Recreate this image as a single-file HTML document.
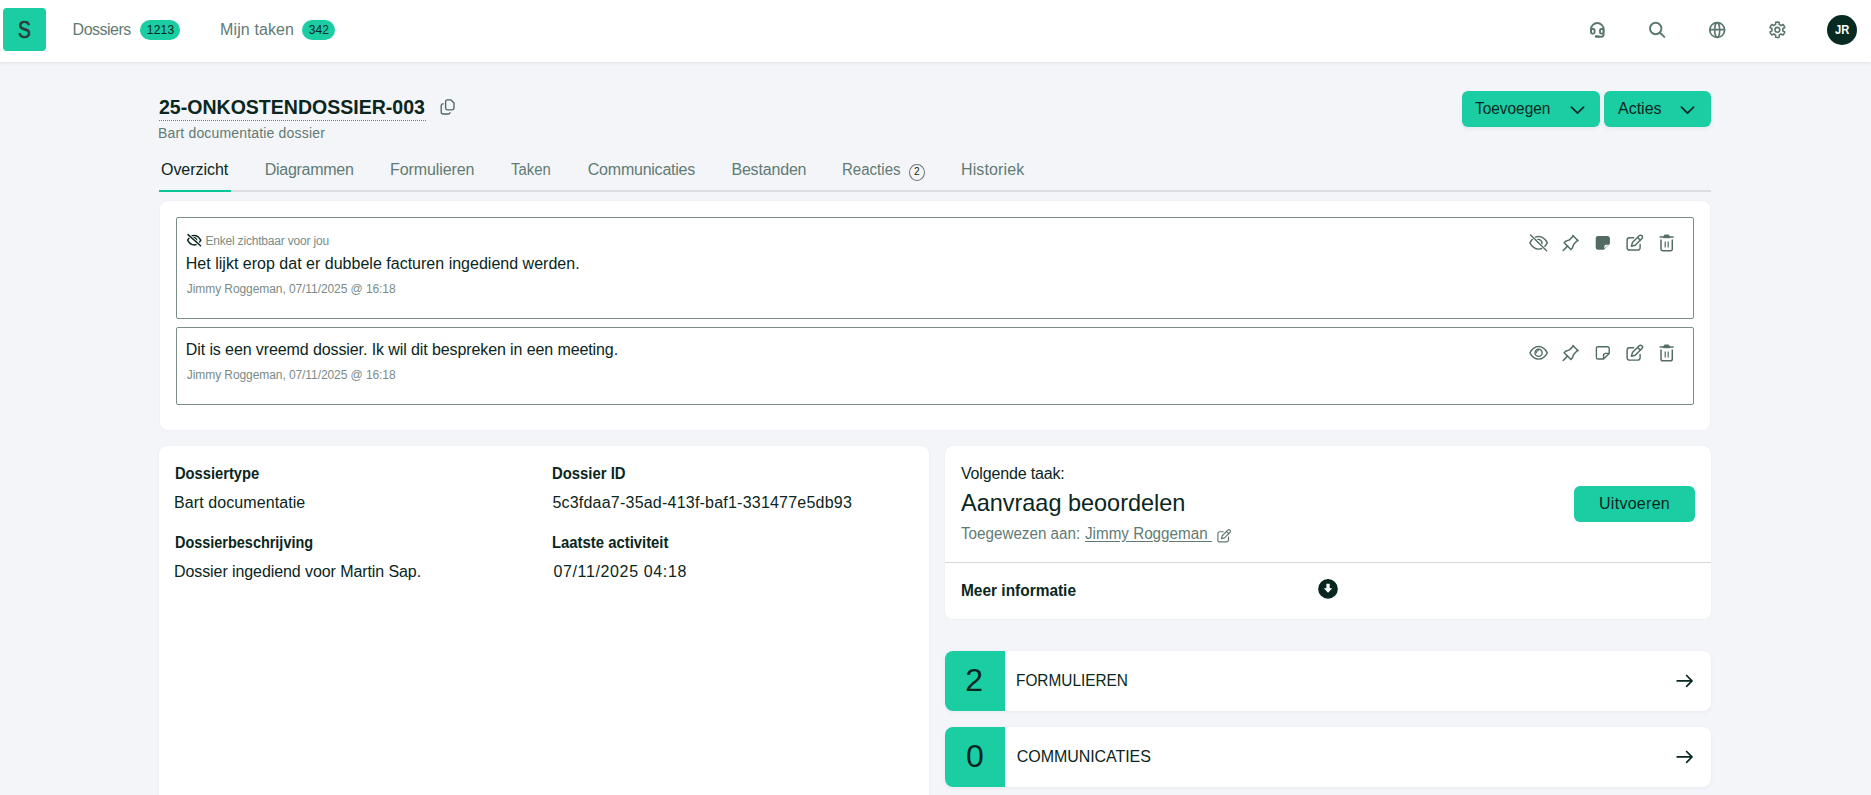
<!DOCTYPE html>
<html><head><meta charset="utf-8"><style>
html,body{margin:0;padding:0;}
body{width:1871px;height:795px;background:#f4f5f9;position:relative;overflow:hidden;font-family:"Liberation Sans",sans-serif;}
.t{position:absolute;white-space:pre;line-height:normal;}
.a{position:absolute;}
svg.a{overflow:visible;}
</style></head><body>
<div class="a" style="left:0;top:0;width:1871px;height:62px;background:#fff;box-shadow:0 1px 3px rgba(20,40,40,.10);"></div>
<div class="a" style="left:3px;top:8px;width:43px;height:43px;border-radius:4px;background:#1acda3;"></div>
<div class="a" style="left:140px;top:20px;width:40px;height:20px;border-radius:10px;background:#1acda3;"></div>
<div class="a" style="left:302px;top:20px;width:33px;height:20px;border-radius:10px;background:#1acda3;"></div>
<div class="a" style="left:1827px;top:15px;width:30px;height:30px;border-radius:50%;background:#072a22;"></div>
<div class="a" style="left:159px;top:120px;width:267px;height:0;border-top:1px dotted #6c817b;"></div>
<div class="a" style="left:1462px;top:91px;width:138px;height:36px;border-radius:6px;background:#1acda3;box-shadow:0 2px 4px rgba(0,0,0,.06);"></div>
<div class="a" style="left:1604px;top:91px;width:107px;height:36px;border-radius:6px;background:#1acda3;box-shadow:0 2px 4px rgba(0,0,0,.06);"></div>
<div class="a" style="left:159px;top:190px;width:1552px;height:2px;background:#dcdfe2;"></div>
<div class="a" style="left:159px;top:190px;width:72px;height:2px;background:#04c898;"></div>
<div class="a" style="left:909px;top:164px;width:14px;height:15px;border-radius:50%;border:1px solid #6f7372;"></div>
<div class="a" style="left:160px;top:201px;width:1550px;height:229px;border-radius:8px;background:#fff;box-shadow:0 0 3px rgba(30,40,60,.05);"></div>
<div class="a" style="left:176px;top:217px;width:1516px;height:100px;border-radius:2px;border:1px solid #7b8e89;"></div>
<div class="a" style="left:176px;top:327px;width:1516px;height:76px;border-radius:2px;border:1px solid #7b8e89;"></div>
<div class="a" style="left:159px;top:446px;width:770px;height:400px;border-radius:8px;background:#fff;box-shadow:0 0 3px rgba(30,40,60,.05);"></div>
<div class="a" style="left:945px;top:446px;width:766px;height:173px;border-radius:8px;background:#fff;box-shadow:0 0 3px rgba(30,40,60,.05);"></div>
<div class="a" style="left:945px;top:562px;width:766px;height:1px;background:#d6dbda;"></div>
<div class="a" style="left:1574px;top:486px;width:121px;height:36px;border-radius:6px;background:#1acda3;"></div>
<div class="a" style="left:945px;top:651px;width:766px;height:60px;border-radius:8px;background:#fff;box-shadow:0 1px 4px rgba(30,40,60,.06);overflow:hidden;"><div style="width:60px;height:60px;background:#1acda3;"></div></div>
<div class="a" style="left:945px;top:727px;width:766px;height:60px;border-radius:8px;background:#fff;box-shadow:0 1px 4px rgba(30,40,60,.06);overflow:hidden;"><div style="width:60px;height:60px;background:#1acda3;"></div></div>

<svg class="a" style="left:0;top:0" width="1871" height="795" viewBox="0 0 1871 795">
<g fill="none" stroke="#5a766f" stroke-width="1.9" stroke-linecap="round" stroke-linejoin="round">
  <path d="M1591 31 V29.3 A6.3 6.3 0 0 1 1603.6 29.3 V31"/>
  <rect x="1591" y="29" width="3.6" height="4.6" rx="1.3"/>
  <rect x="1600" y="29" width="3.6" height="4.6" rx="1.3"/>
  <path d="M1603.6 33 V34.2 a2.6 2.6 0 0 1 -2.6 2.6 H1598.5"/>
  <line x1="1596" y1="36.5" x2="1598.2" y2="36.5" stroke-width="2.5"/>
  <circle cx="1655.7" cy="28.5" r="5.7"/>
  <line x1="1660" y1="32.8" x2="1664.3" y2="36.9"/>
  <circle cx="1717.2" cy="30" r="7.4" stroke-width="1.7"/>
  <ellipse cx="1717.2" cy="30" rx="2.5" ry="7.4" stroke-width="1.6"/>
  <line x1="1710" y1="29.6" x2="1724.4" y2="29.6" stroke-width="1.6"/>
  <path d="M1775.61 24.60 L1775.67 22.30 A7.7 7.7 0 0 1 1779.13 22.30 L1779.19 24.60 A5.5 5.5 0 0 1 1781.01 25.65 L1783.03 24.55 A7.7 7.7 0 0 1 1784.76 27.55 L1782.80 28.75 A5.5 5.5 0 0 1 1782.80 30.85 L1784.76 32.05 A7.7 7.7 0 0 1 1783.03 35.05 L1781.01 33.95 A5.5 5.5 0 0 1 1779.19 35.00 L1779.13 37.30 A7.7 7.7 0 0 1 1775.67 37.30 L1775.61 35.00 A5.5 5.5 0 0 1 1773.79 33.95 L1771.77 35.05 A7.7 7.7 0 0 1 1770.04 32.05 L1772.00 30.85 A5.5 5.5 0 0 1 1772.00 28.75 L1770.04 27.55 A7.7 7.7 0 0 1 1771.77 24.55 L1773.79 25.65 A5.5 5.5 0 0 1 1775.61 24.60 Z" stroke-width="1.6"/>
  <circle cx="1777.4" cy="29.8" r="2.4" stroke-width="1.6"/>
</g>
<g fill="none" stroke="#4f6660" stroke-width="1.35" stroke-linejoin="round" stroke-linecap="round">
  <path d="M447.4 99.9 H451 L454 102.9 V108.1 a1.8 1.8 0 0 1 -1.8 1.8 H447.4 a1.8 1.8 0 0 1 -1.8 -1.8 V101.7 a1.8 1.8 0 0 1 1.8 -1.8 Z"/>
  <path d="M443.3 103.8 H443 a1.8 1.8 0 0 0 -1.8 1.8 V112.2 a1.8 1.8 0 0 0 1.8 1.8 H448.3 a1.8 1.8 0 0 0 1.7 -1.4"/>
</g>
<g fill="none" stroke="#0a2620" stroke-width="1.7" stroke-linecap="round" stroke-linejoin="round">
  <polyline points="1571.4,107.1 1577.5,113.1 1583.6,107.1"/>
  <polyline points="1681.4,107.1 1687.5,113.1 1693.6,107.1"/>
  <path d="M1677.2 680.9 H1692 M1686.6 675.5 L1692 680.9 L1686.6 686.3"/>
  <path d="M1677.2 756.9 H1692 M1686.6 751.5 L1692 756.9 L1686.6 762.3"/>
</g>
<g fill="none" stroke="#0a2620" stroke-width="1.45" stroke-linecap="round">
  <path d="M187.60 240.20 C189.58 236.55 191.30 235.40 194.20 235.40 C197.10 235.40 198.82 236.55 200.80 240.20 C198.82 243.85 197.10 245.00 194.20 245.00 C191.30 245.00 189.58 243.85 187.60 240.20 Z"/>
  <path d="M192.50 238.50 A2.4 2.4 0 0 1 195.90 241.90"/>
  <line x1="188" y1="234.6" x2="200.6" y2="245.8" stroke="#fff" stroke-width="3.2" stroke-linecap="butt"/>
  <line x1="188" y1="234.6" x2="200.6" y2="245.8"/>
</g>
<path d="M1529.90 242.80 C1532.51 238.01 1534.77 236.50 1538.60 236.50 C1542.43 236.50 1544.69 238.01 1547.30 242.80 C1544.69 247.59 1542.43 249.10 1538.60 249.10 C1534.77 249.10 1532.51 247.59 1529.90 242.80 Z" fill="none" stroke="#526c65" stroke-width="1.4"/><path d="M1536.20 240.40 A3.4 3.4 0 0 1 1541.00 245.20" fill="none" stroke="#526c65" stroke-width="1.4"/><line x1="1530.6" y1="235.0" x2="1546.6" y2="250.8" stroke="#fff" stroke-width="2.8"/><line x1="1530.6" y1="235.0" x2="1546.6" y2="250.8" stroke="#526c65" stroke-width="1.4" stroke-linecap="round"/><g transform="translate(1558.9 231.7) scale(0.96)" fill="none" stroke="#526c65" stroke-width="1.56" stroke-linecap="round" stroke-linejoin="round"><path d="M15 4.5l-4 4l-4 1.5l-1.5 1.5l7 7l1.5 -1.5l1.5 -4l4 -4"/><path d="M9 15l-4.5 4.5"/><path d="M14.5 4l5.5 5.5"/></g><path d="M1598.0 236.7 H1607.6000000000001 a1.6 1.6 0 0 1 1.6 1.6 V243.4 L1603.6000000000001 249.0 H1598.0 a1.6 1.6 0 0 1 -1.6 -1.6 V238.29999999999998 a1.6 1.6 0 0 1 1.6 -1.6 Z" fill="#526c65" stroke="#526c65" stroke-width="1.4" stroke-linejoin="round"/><path d="M1604.3 248.6 V246.6 a1.9 1.9 0 0 1 1.9 -1.9 H1608.6 Z" fill="#fff"/><g transform="" fill="none" stroke="#526c65" stroke-width="1.45" stroke-linejoin="round" stroke-linecap="round"><path d="M1633.6 237.8 H1629.5 a2.4 2.4 0 0 0 -2.4 2.4 V247.7 a2.4 2.4 0 0 0 2.4 2.4 H1637.7 a2.4 2.4 0 0 0 2.4 -2.4 V244.4"/><path d="M1631.4 246.2 L1632.4 242.6 L1639.2 235.8 a1.95 1.95 0 0 1 2.76 2.76 L1635.2 245.3 Z"/><line x1="1637.6" y1="237.4" x2="1640.4" y2="240.2"/></g><g fill="none" stroke="#526c65" stroke-linecap="round"><line x1="1660.2" y1="237.0" x2="1673.0" y2="237.0" stroke-width="1.6"/><path d="M1663.6 237.4 L1664.5 234.9 H1668.7 L1669.6 237.4 Z" fill="#526c65" stroke-width="0.8" stroke-linejoin="round"/><path d="M1661.0 239.4 V248.9 a1.8 1.8 0 0 0 1.8 1.8 H1670.5 a1.8 1.8 0 0 0 1.8 -1.8 V239.4" stroke-width="1.5" stroke-linecap="butt"/><line x1="1665.2" y1="241.6" x2="1665.2" y2="247.5" stroke-width="1.2" stroke-linecap="butt"/><line x1="1668.2" y1="241.6" x2="1668.2" y2="247.5" stroke-width="1.2" stroke-linecap="butt"/></g>
<path d="M1529.90 352.80 C1532.51 348.01 1534.77 346.50 1538.60 346.50 C1542.43 346.50 1544.69 348.01 1547.30 352.80 C1544.69 357.59 1542.43 359.10 1538.60 359.10 C1534.77 359.10 1532.51 357.59 1529.90 352.80 Z" fill="none" stroke="#526c65" stroke-width="1.4"/><circle cx="1538.6" cy="352.8" r="3.6" fill="none" stroke="#526c65" stroke-width="1.4"/><path d="M1536.40 353.10 A2.3 2.3 0 0 1 1538.80 350.50" fill="none" stroke="#526c65" stroke-width="1.1"/><g transform="translate(1558.9 341.7) scale(0.96)" fill="none" stroke="#526c65" stroke-width="1.56" stroke-linecap="round" stroke-linejoin="round"><path d="M15 4.5l-4 4l-4 1.5l-1.5 1.5l7 7l1.5 -1.5l1.5 -4l4 -4"/><path d="M9 15l-4.5 4.5"/><path d="M14.5 4l5.5 5.5"/></g><path d="M1598.0 346.7 H1607.6000000000001 a1.6 1.6 0 0 1 1.6 1.6 V353.4 L1603.6000000000001 359.0 H1598.0 a1.6 1.6 0 0 1 -1.6 -1.6 V348.3 a1.6 1.6 0 0 1 1.6 -1.6 Z" fill="none" stroke="#526c65" stroke-width="1.4" stroke-linejoin="round"/><path d="M1603.6000000000001 359.0 V355.2 a1.8 1.8 0 0 1 1.8 -1.8 H1609.2" fill="none" stroke="#526c65" stroke-width="1.4" stroke-linejoin="round"/><g transform="" fill="none" stroke="#526c65" stroke-width="1.45" stroke-linejoin="round" stroke-linecap="round"><path d="M1633.6 347.8 H1629.5 a2.4 2.4 0 0 0 -2.4 2.4 V357.7 a2.4 2.4 0 0 0 2.4 2.4 H1637.7 a2.4 2.4 0 0 0 2.4 -2.4 V354.4"/><path d="M1631.4 356.2 L1632.4 352.6 L1639.2 345.8 a1.95 1.95 0 0 1 2.76 2.76 L1635.2 355.3 Z"/><line x1="1637.6" y1="347.4" x2="1640.4" y2="350.2"/></g><g fill="none" stroke="#526c65" stroke-linecap="round"><line x1="1660.2" y1="347.0" x2="1673.0" y2="347.0" stroke-width="1.6"/><path d="M1663.6 347.4 L1664.5 344.9 H1668.7 L1669.6 347.4 Z" fill="#526c65" stroke-width="0.8" stroke-linejoin="round"/><path d="M1661.0 349.4 V358.9 a1.8 1.8 0 0 0 1.8 1.8 H1670.5 a1.8 1.8 0 0 0 1.8 -1.8 V349.4" stroke-width="1.5" stroke-linecap="butt"/><line x1="1665.2" y1="351.6" x2="1665.2" y2="357.5" stroke-width="1.2" stroke-linecap="butt"/><line x1="1668.2" y1="351.6" x2="1668.2" y2="357.5" stroke-width="1.2" stroke-linecap="butt"/></g>
<g transform="translate(1217.3 529.4) scale(0.82) translate(-1626.4 -234.9)" fill="none" stroke="#5f7b74" stroke-width="1.45" stroke-linejoin="round" stroke-linecap="round"><path d="M1633.6 237.8 H1629.5 a2.4 2.4 0 0 0 -2.4 2.4 V247.7 a2.4 2.4 0 0 0 2.4 2.4 H1637.7 a2.4 2.4 0 0 0 2.4 -2.4 V244.4"/><path d="M1631.4 246.2 L1632.4 242.6 L1639.2 235.8 a1.95 1.95 0 0 1 2.76 2.76 L1635.2 245.3 Z"/><line x1="1637.6" y1="237.4" x2="1640.4" y2="240.2"/></g>
<circle cx="1328" cy="588.9" r="9.85" fill="#0a2620"/>
<path d="M1326.4 583.8 H1329.7 V588.2 H1332.3 L1328.05 592.8 L1323.8 588.2 H1326.4 Z" fill="#fff"/>
</svg>
<div id="t_S" class="t" style="left:18px;top:16px;font-size:24px;font-weight:400;color:#2b3e39;letter-spacing:0px;-webkit-text-stroke:0.7px #2b3e39;transform:scaleX(0.8000);transform-origin:0 0;">S</div>
<div id="t_nav1" class="t" style="left:72.6px;top:21px;font-size:16px;font-weight:400;color:#5f7b74;letter-spacing:-0.515px;">Dossiers</div>
<div id="t_b1" class="t" style="left:146.8px;top:23px;font-size:12px;font-weight:400;color:#0a2620;letter-spacing:0.201px;">1213</div>
<div id="t_nav2" class="t" style="left:220.1px;top:21px;font-size:16px;font-weight:400;color:#5f7b74;letter-spacing:0.102px;">Mijn taken</div>
<div id="t_b2" class="t" style="left:308.8px;top:23px;font-size:12px;font-weight:400;color:#0a2620;letter-spacing:0.0px;">342</div>
<div id="t_JR" class="t" style="left:1834.5px;top:22px;font-size:13px;font-weight:700;color:#ffffff;letter-spacing:0px;transform:scaleX(0.8619);transform-origin:0 0;">JR</div>
<div id="t_title" class="t" style="left:159.0px;top:95px;font-size:21px;font-weight:700;color:#0a2620;letter-spacing:0px;transform:scaleX(0.9300);transform-origin:0 0;">25-ONKOSTENDOSSIER-003</div>
<div id="t_sub" class="t" style="left:158.0px;top:125px;font-size:14px;font-weight:400;color:#5f7b74;letter-spacing:0.173px;">Bart documentatie dossier</div>
<div id="t_btn1" class="t" style="left:1475.0px;top:100px;font-size:16px;font-weight:400;color:#0a2620;letter-spacing:0px;transform:scaleX(0.9628);transform-origin:0 0;">Toevoegen</div>
<div id="t_btn2" class="t" style="left:1618.0px;top:100px;font-size:16px;font-weight:400;color:#0a2620;letter-spacing:0.0px;">Acties</div>
<div id="t_tab1" class="t" style="left:161.0px;top:161px;font-size:16px;font-weight:400;color:#0a2620;letter-spacing:-0.05px;">Overzicht</div>
<div id="t_tab2" class="t" style="left:264.8px;top:161px;font-size:16px;font-weight:400;color:#5f7b74;letter-spacing:-0.288px;">Diagrammen</div>
<div id="t_tab3" class="t" style="left:390.0px;top:161px;font-size:16px;font-weight:400;color:#5f7b74;letter-spacing:-0.1px;">Formulieren</div>
<div id="t_tab4" class="t" style="left:511.0px;top:161px;font-size:16px;font-weight:400;color:#5f7b74;letter-spacing:0px;transform:scaleX(0.9288);transform-origin:0 0;">Taken</div>
<div id="t_tab5" class="t" style="left:587.8px;top:161px;font-size:16px;font-weight:400;color:#5f7b74;letter-spacing:-0.234px;">Communicaties</div>
<div id="t_tab6" class="t" style="left:731.4px;top:161px;font-size:16px;font-weight:400;color:#5f7b74;letter-spacing:-0.175px;">Bestanden</div>
<div id="t_tab7" class="t" style="left:842.0px;top:161px;font-size:16px;font-weight:400;color:#5f7b74;letter-spacing:0px;transform:scaleX(0.9401);transform-origin:0 0;">Reacties</div>
<div id="t_tab7b" class="t" style="left:914px;top:166px;font-size:10px;font-weight:400;color:#0a2620;letter-spacing:0px;">2</div>
<div id="t_tab8" class="t" style="left:961.0px;top:161px;font-size:16px;font-weight:400;color:#5f7b74;letter-spacing:0.125px;">Historiek</div>
<div id="t_vis" class="t" style="left:205.4px;top:234px;font-size:12px;font-weight:400;color:#7a8c87;letter-spacing:-0.191px;">Enkel zichtbaar voor jou</div>
<div id="t_n1" class="t" style="left:185.8px;top:255px;font-size:16px;font-weight:400;color:#0a2620;letter-spacing:0.012px;">Het lijkt erop dat er dubbele facturen ingediend werden.</div>
<div id="t_m1" class="t" style="left:186.8px;top:282px;font-size:12px;font-weight:400;color:#7a8c87;letter-spacing:-0.079px;">Jimmy Roggeman, 07/11/2025 @ 16:18</div>
<div id="t_n2" class="t" style="left:185.8px;top:341px;font-size:16px;font-weight:400;color:#0a2620;letter-spacing:-0.099px;">Dit is een vreemd dossier. Ik wil dit bespreken in een meeting.</div>
<div id="t_m2" class="t" style="left:186.8px;top:368px;font-size:12px;font-weight:400;color:#7a8c87;letter-spacing:-0.079px;">Jimmy Roggeman, 07/11/2025 @ 16:18</div>
<div id="t_d1" class="t" style="left:175.0px;top:465px;font-size:16px;font-weight:700;color:#0a2620;letter-spacing:0px;transform:scaleX(0.9195);transform-origin:0 0;">Dossiertype</div>
<div id="t_d2" class="t" style="left:174.0px;top:494px;font-size:16px;font-weight:400;color:#0a2620;letter-spacing:0.086px;">Bart documentatie</div>
<div id="t_d3" class="t" style="left:175.0px;top:534px;font-size:16px;font-weight:700;color:#0a2620;letter-spacing:0px;transform:scaleX(0.9028);transform-origin:0 0;">Dossierbeschrijving</div>
<div id="t_d4" class="t" style="left:174.0px;top:563px;font-size:16px;font-weight:400;color:#0a2620;letter-spacing:-0.085px;">Dossier ingediend voor Martin Sap.</div>
<div id="t_d5" class="t" style="left:552.4px;top:465px;font-size:16px;font-weight:700;color:#0a2620;letter-spacing:0px;transform:scaleX(0.9285);transform-origin:0 0;">Dossier ID</div>
<div id="t_d6" class="t" style="left:552.4px;top:494px;font-size:16px;font-weight:400;color:#0a2620;letter-spacing:0.218px;">5c3fdaa7-35ad-413f-baf1-331477e5db93</div>
<div id="t_d7" class="t" style="left:552.4px;top:534px;font-size:16px;font-weight:700;color:#0a2620;letter-spacing:0px;transform:scaleX(0.9286);transform-origin:0 0;">Laatste activiteit</div>
<div id="t_d8" class="t" style="left:553.4px;top:563px;font-size:16px;font-weight:400;color:#0a2620;letter-spacing:0.641px;">07/11/2025 04:18</div>
<div id="t_k1" class="t" style="left:961.0px;top:465px;font-size:16px;font-weight:400;color:#0a2620;letter-spacing:-0.167px;">Volgende taak:</div>
<div id="t_k2" class="t" style="left:960.6px;top:489px;font-size:24px;font-weight:400;color:#0a2620;letter-spacing:0px;transform:scaleX(0.9776);transform-origin:0 0;">Aanvraag beoordelen</div>
<div id="t_k3" class="t" style="left:960.6px;top:525px;font-size:16px;font-weight:400;color:#5f7b74;letter-spacing:0px;transform:scaleX(0.9500);transform-origin:0 0;">Toegewezen aan:</div>
<div id="t_k4" class="t" style="left:1085.2px;top:525px;font-size:16px;font-weight:400;color:#5f7b74;letter-spacing:0px;text-decoration:underline;text-underline-offset:2px;transform:scaleX(0.9509);transform-origin:0 0;">Jimmy Roggeman </div>
<div id="t_k5" class="t" style="left:1599.0px;top:495px;font-size:16px;font-weight:400;color:#0a2620;letter-spacing:0.278px;">Uitvoeren</div>
<div id="t_k6" class="t" style="left:961.0px;top:582px;font-size:16px;font-weight:700;color:#0a2620;letter-spacing:0px;transform:scaleX(0.9652);transform-origin:0 0;">Meer informatie</div>
<div id="t_c1" class="t" style="left:965.2px;top:662px;font-size:32px;font-weight:400;color:#0a2620;letter-spacing:0px;">2</div>
<div id="t_c2" class="t" style="left:1016.0px;top:672px;font-size:16px;font-weight:400;color:#0a2620;letter-spacing:0px;transform:scaleX(0.9614);transform-origin:0 0;">FORMULIEREN</div>
<div id="t_c3" class="t" style="left:966px;top:738px;font-size:32px;font-weight:400;color:#0a2620;letter-spacing:0px;">0</div>
<div id="t_c4" class="t" style="left:1016.8px;top:748px;font-size:16px;font-weight:400;color:#0a2620;letter-spacing:-0.066px;">COMMUNICATIES</div>
</body></html>
